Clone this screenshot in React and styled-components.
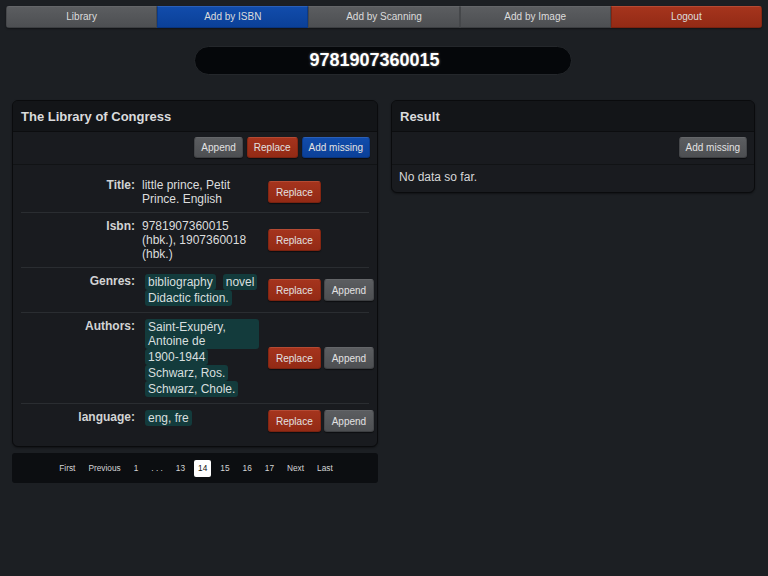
import React from "react";
import styled, { createGlobalStyle, css } from "styled-components";

const GlobalStyle = createGlobalStyle`
  body {
    margin: 0;
    background: #1c1f23;
    font-family: "Liberation Sans", Arial, sans-serif;
    color: #d6d7d8;
  }
`;

const TABS = [
  { label: "Library", variant: "gray" },
  { label: "Add by ISBN", variant: "blue" },
  { label: "Add by Scanning", variant: "gray" },
  { label: "Add by Image", variant: "gray" },
  { label: "Logout", variant: "red" },
];

const FIELDS = [
  { label: "Title:", text: "little prince, Petit Prince. English", append: false },
  { label: "Isbn:", text: "9781907360015 (hbk.), 1907360018 (hbk.)", append: false },
  { label: "Genres:", tags: ["bibliography", "novel", "Didactic fiction."], append: true },
  {
    label: "Authors:",
    tags: ["Saint-Exupéry, Antoine de", "1900-1944", "Schwarz, Ros.", "Schwarz, Chole."],
    append: true,
  },
  { label: "language:", tags: ["eng, fre"], append: true },
];

const PAGES = ["First", "Previous", "1", "…", "13", "14", "15", "16", "17", "Next", "Last"];

function App() {
  return (
    <Page>
      <GlobalStyle />
      <Nav>
        {TABS.map((tab) => (
          <NavButton key={tab.label} $variant={tab.variant}>
            {tab.label}
          </NavButton>
        ))}
      </Nav>

      <SearchRow>
        <IsbnInput value="9781907360015" readOnly />
      </SearchRow>

      <Columns>
        <Column>
          <Panel>
            <PanelHeader>The Library of Congress</PanelHeader>
            <ActionBar>
              <Button $variant="gray">Append</Button>
              <Button $variant="red">Replace</Button>
              <Button $variant="blue">Add missing</Button>
            </ActionBar>
            <FieldList>
              {FIELDS.map((field) => (
                <FieldRow key={field.label}>
                  <FieldLabel>{field.label}</FieldLabel>
                  <FieldValue>
                    {field.text ? (
                      <PlainText>{field.text}</PlainText>
                    ) : (
                      <TagList>
                        {field.tags.map((tag) => (
                          <Tag key={tag}>{tag}</Tag>
                        ))}
                      </TagList>
                    )}
                  </FieldValue>
                  <RowButtons>
                    <Button $variant="red" $wide>Replace</Button>
                    {field.append && <Button $variant="gray" $wide>Append</Button>}
                  </RowButtons>
                </FieldRow>
              ))}
            </FieldList>
          </Panel>

          <Pagination>
            {PAGES.map((page) => (
              <PageItem key={page} $active={page === "14"}>
                {page === "…" ? ". . ." : page}
              </PageItem>
            ))}
          </Pagination>
        </Column>

        <Column>
          <Panel>
            <PanelHeader>Result</PanelHeader>
            <ActionBar>
              <Button $variant="gray">Add missing</Button>
            </ActionBar>
            <EmptyText>No data so far.</EmptyText>
          </Panel>
        </Column>
      </Columns>
    </Page>
  );
}

export default App;

const variants = {
  gray: css`
    background: linear-gradient(#5b5d60, #4d4f52);
    border-color: #646669 #45474a #3c3e41;
  `,
  blue: css`
    background: linear-gradient(#114cab, #0b4098);
    border-color: #2a5fb8 #0a3a8a #083480;
  `,
  red: css`
    background: linear-gradient(#a5341d, #932a15);
    border-color: #b54a33 #852612 #7a2210;
  `,
};

const Page = styled.div`
  padding: 6px 13px 20px 12px;
`;

const Nav = styled.div`
  display: flex;
  margin: 0 -7px 0 -6px;
  height: 22px;
  border-radius: 3px;
  overflow: hidden;
  box-shadow: 0 1px 2px rgba(0, 0, 0, 0.4);
`;

const NavButton = styled.div`
  flex: 1;
  display: flex;
  align-items: center;
  justify-content: center;
  padding-bottom: 1px;
  font-size: 10px;
  color: #dcdcdc;
  border: 1px solid;
  ${(p) => variants[p.$variant]}
`;

const SearchRow = styled.div`
  display: flex;
  justify-content: center;
  margin: 18px 0 25px;
`;

const IsbnInput = styled.input`
  width: 378px;
  height: 29px;
  box-sizing: border-box;
  margin-right: 2px;
  padding: 0 16px 0 0;
  border: 1px solid #24272b;
  border-radius: 15px;
  background: #05070a;
  color: #ffffff;
  font-family: "Liberation Sans", Arial, sans-serif;
  font-size: 18px;
  font-weight: bold;
  text-align: center;
  text-shadow: 0 0 3px rgba(255, 255, 255, 0.4);
  outline: none;
`;

const Columns = styled.div`
  display: grid;
  grid-template-columns: 366px 364px;
  column-gap: 13px;
  align-items: start;
`;

const Column = styled.div`
  display: flex;
  flex-direction: column;
  gap: 6px;
`;

const Panel = styled.div`
  background: #191b1f;
  border: 1px solid #0a0b0d;
  border-radius: 6px;
  overflow: hidden;
  box-shadow: 0 1px 2px rgba(0, 0, 0, 0.4);
`;

const PanelHeader = styled.div`
  padding: 8px 8px 6px;
  line-height: 16px;
  font-size: 13px;
  font-weight: bold;
  color: #dadbdc;
  background: #131518;
  border-bottom: 1px solid #0c0d0f;
`;

const ActionBar = styled.div`
  display: flex;
  justify-content: flex-end;
  gap: 4px;
  padding: 5px 7px 6px;
  border-bottom: 1px solid #111315;
`;

const Button = styled.button`
  height: ${(p) => (p.$wide ? "22px" : "21px")};
  padding: 0 ${(p) => (p.$wide ? "7px" : "6px")};
  border: 1px solid;
  border-radius: 3px;
  font-family: "Liberation Sans", Arial, sans-serif;
  font-size: 10px;
  color: #e2e2e2;
  box-shadow: 0 1px 1px rgba(0, 0, 0, 0.5);
  cursor: pointer;
  ${(p) => variants[p.$variant]}
`;

const FieldList = styled.div`
  padding: 7px 8px 8px;
`;

const FieldRow = styled.div`
  display: grid;
  grid-template-columns: 114px 117px auto;
  column-gap: 7px;
  align-items: start;
  padding: 6px 0;
  border-bottom: 1px solid #2a2d31;

  &:last-child {
    border-bottom: none;
  }
`;

const FieldLabel = styled.div`
  text-align: right;
  font-size: 12px;
  line-height: 14px;
  font-weight: bold;
  color: #d2d3d4;
`;

const FieldValue = styled.div`
  font-size: 12px;
  line-height: 14px;
  min-width: 0;
`;

const PlainText = styled.div`
  color: #dcdddd;
`;

const TagList = styled.div`
  display: flex;
  flex-wrap: wrap;
  column-gap: 7px;
  padding-left: 3px;
`;

const Tag = styled.span`
  max-width: 100%;
  box-sizing: border-box;
  padding: 1px 3px;
  border-radius: 3px;
  background: #133b3c;
  color: #d8dfdf;
`;

const RowButtons = styled.div`
  align-self: center;
  display: flex;
  gap: 3px;
  margin-left: 2px;
`;

const Pagination = styled.div`
  display: flex;
  justify-content: center;
  align-items: center;
  gap: 5px;
  height: 30px;
  padding-left: 2px;
  background: #0c0e11;
  border-radius: 3px;
`;

const PageItem = styled.span`
  height: 17px;
  line-height: 17px;
  padding: 0 4px;
  border-radius: 2px;
  font-size: 8.3px;
  color: ${(p) => (p.$active ? "#111" : "#d4d5d6")};
  background: ${(p) => (p.$active ? "#ffffff" : "transparent")};
`;

const EmptyText = styled.div`
  padding: 5px 7px 8px;
  font-size: 12px;
  line-height: 14px;
  color: #d6d7d8;
`;
